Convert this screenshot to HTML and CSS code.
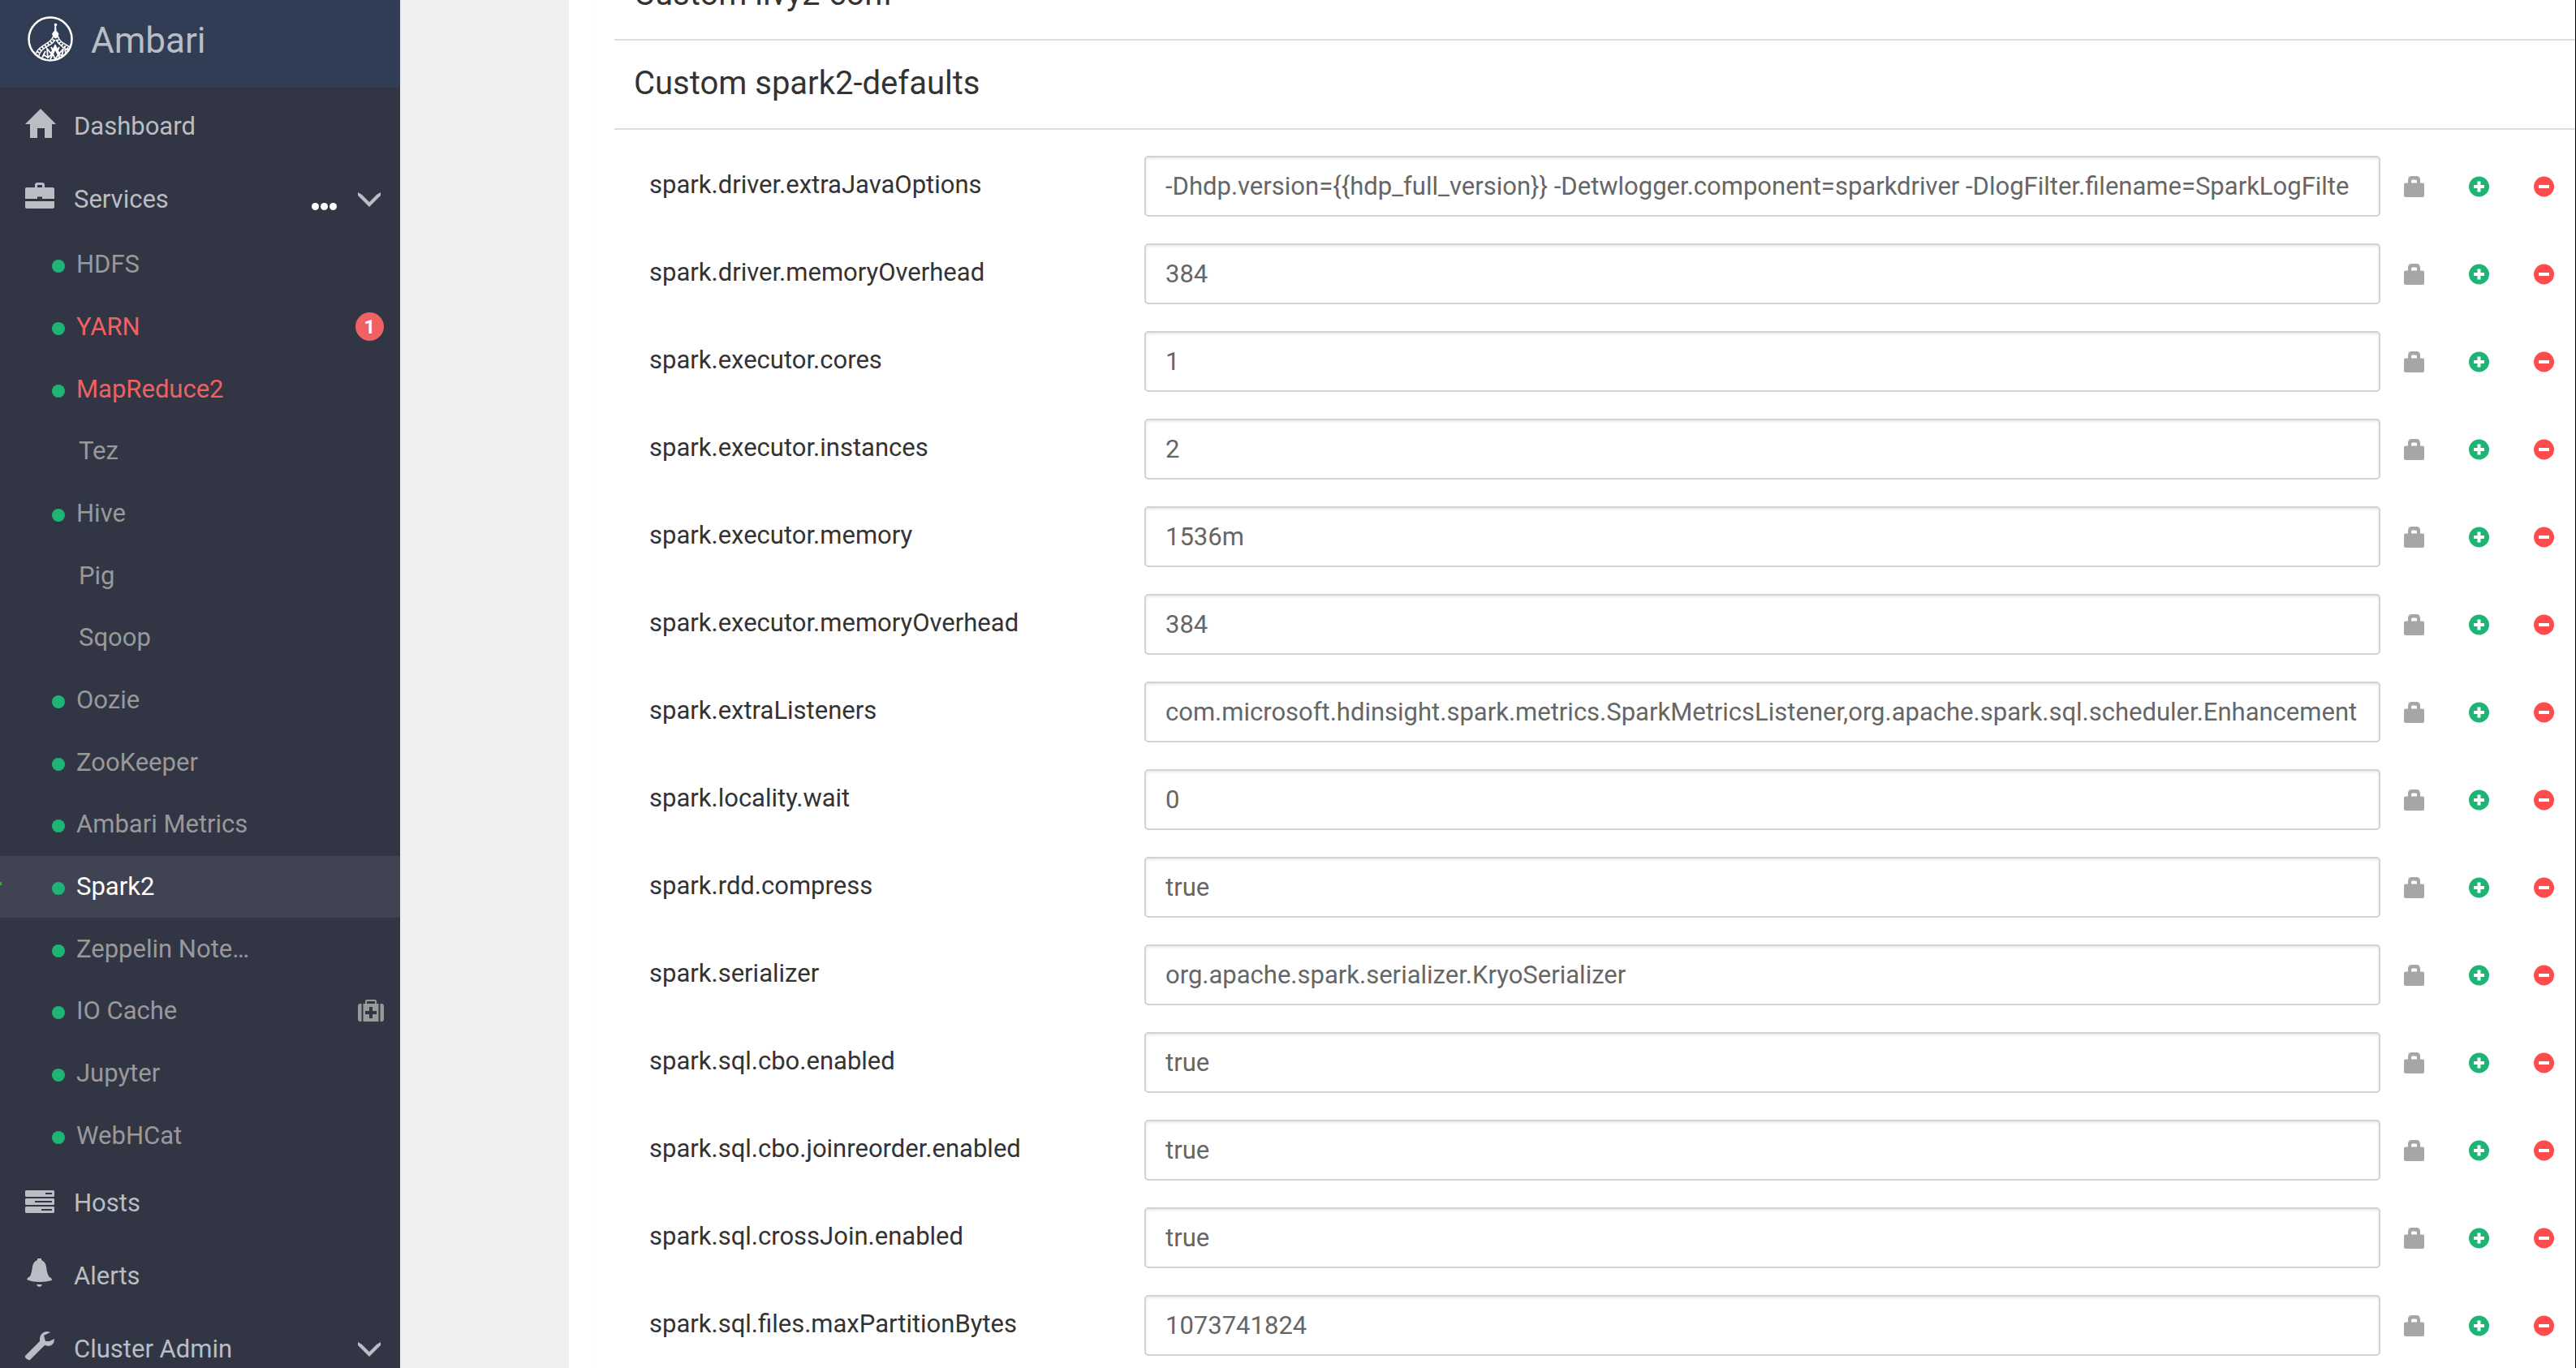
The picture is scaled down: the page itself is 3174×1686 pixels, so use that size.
FILE: index.html
```
<!DOCTYPE html>
<html lang="en">
<head>
  <meta charset="UTF-8" />
  <meta name="viewport" content="width=device-width, initial-scale=1" />
  <title>Ambari - Spark2</title>
  <link rel="stylesheet" href="styles.css">
</head>
<body>
  <svg class="sprite" aria-hidden="true">
    <symbol id="icon-lock" viewBox="0 0 25 26">
      <path fill-rule="evenodd" d="M0 10.500Q0 8.500 2 8.500H5V5Q5 0 10 0H15Q20 0 20 5V8.500H23Q25 8.500 25 10.500V24Q25 26 23 26H2Q0 26 0 24ZM9 8.500H16V6Q16 4.500 14.500 4.500H10.500Q9 4.500 9 6Z"/>
    </symbol>
    <symbol id="icon-plus" viewBox="0 0 25 25">
      <path fill-rule="evenodd" d="M12.500 0A12.500 12.500 0 1 1 12.500 25A12.500 12.500 0 1 1 12.500 0ZM10.500 6V10.500H6V14.500H10.500V19H14.500V14.500H19V10.500H14.500V6Z"/>
    </symbol>
    <symbol id="icon-minus" viewBox="0 0 25 25">
      <path fill-rule="evenodd" d="M12.500 0A12.500 12.500 0 1 1 12.500 25A12.500 12.500 0 1 1 12.500 0ZM6 10.500V14.500H19V10.500Z"/>
    </symbol>
    <symbol id="icon-chevron" viewBox="0 0 28 18">
      <path d="M0 0L5 3L14 12L23 3L28 0V4L14 18L0 4Z"/>
    </symbol>
  </svg>

  <div class="layout">
    <aside class="sidebar">
      <a class="brand" href="#">
        <svg class="brand-logo" viewBox="0 0 56 56" aria-hidden="true">
          <circle cx="28" cy="28" r="26.500" fill="none" stroke="#fff" stroke-width="2.500"/>
          <path fill="#fff" d="M33.500 9h1.500l.5 9 1.500 1.500 1.500 2.500-1.500 3h-5.500l-1.500-3 1.500-2.500 1.500-1.500z"/>
          <circle cx="34.500" cy="10.500" r="1.800" fill="#fff"/>
          <path fill="none" stroke="#fff" stroke-width="1.500" d="M32 24Q31 28 27 31L18 37Q12 41 10 46M37 24Q38 28 42 32L52 38M34 29Q32 33 26 36L20 40Q15 44 14 49M35 29Q38 34 43 38L51 43"/>
          <path fill="none" stroke="#fff" stroke-width="3" stroke-dasharray="2 2" d="M34 25Q33 30 26 34L18 39Q13 43 12 48M35 25Q37 31 42 35L51 41"/>
          <path fill="none" stroke="#fff" stroke-width="1.800" d="M18 51L22 43M25 52L24 40L29 46L34 36L39 46L44 40L42 50M28 53L34 40L40 52M19 47L25 51L31 46L34 53L38 47L44 49M46 41L47 46M29 38L31 42M39 38L37 42"/>
        </svg>
        <span>Ambari</span>
      </a>

      <nav>
        <a class="nav-item" href="#">
          <svg class="nav-icon" viewBox="0 0 38 38" aria-hidden="true"><path d="M19 1L38 20H33V37H24V25H15V37H6V20H0Z"/></svg>
          <span>Dashboard</span>
        </a>
        <a class="nav-item" href="#">
          <svg class="nav-icon" viewBox="0 0 38 38" aria-hidden="true"><path fill-rule="evenodd" d="M12 8V5Q12 2 15 2H21Q24 2 24 5V8H34Q36 8 36 10V22H21V19.500H15V22H0V10Q0 8 2 8ZM15 8H21V5H15ZM0 25H36V32Q36 34 34 34H2Q0 34 0 32Z"/></svg>
          <span>Services</span>
          <span class="nav-tools">
            <button class="more" type="button" aria-label="Service actions"><i></i><i></i><i></i></button>
            <svg class="chevron" aria-hidden="true"><use href="#icon-chevron"/></svg>
          </span>
        </a>

        <ul class="services">
          <li><a href="#"><i class="dot"></i>HDFS</a></li>
          <li><a class="alerted" href="#"><i class="dot"></i>YARN<span class="badge">1</span></a></li>
          <li><a class="alerted" href="#"><i class="dot"></i>MapReduce2</a></li>
          <li><a class="client" href="#">Tez</a></li>
          <li><a href="#"><i class="dot"></i>Hive</a></li>
          <li><a class="client" href="#">Pig</a></li>
          <li><a class="client" href="#">Sqoop</a></li>
          <li><a href="#"><i class="dot"></i>Oozie</a></li>
          <li><a href="#"><i class="dot"></i>ZooKeeper</a></li>
          <li><a href="#"><i class="dot"></i>Ambari Metrics</a></li>
          <li><a class="active" href="#"><i class="dot"></i>Spark2</a></li>
          <li><a href="#"><i class="dot"></i>Zeppelin Note…</a></li>
          <li><a href="#"><i class="dot"></i>IO Cache
            <svg class="medkit" viewBox="0 0 32 28" aria-label="Maintenance mode"><path fill-rule="evenodd" d="M3 5H4.500V27H3Q0 27 0 24V8Q0 5 3 5ZM27.500 5H29Q32 5 32 8V24Q32 27 29 27H27.500ZM6.500 5H9V2Q9 0 11 0H21Q23 0 23 2V5H25.500V27H6.500ZM11 5H21V2H11ZM14 9V14H9V18H14V23H18V18H23V14H18V9Z"/></svg>
          </a></li>
          <li><a href="#"><i class="dot"></i>Jupyter</a></li>
          <li><a href="#"><i class="dot"></i>WebHCat</a></li>
        </ul>

        <a class="nav-item" href="#">
          <svg class="nav-icon" viewBox="0 0 38 38" aria-hidden="true"><path fill-rule="evenodd" d="M1 7H35L36 8V14L35 15H1L0 14V8ZM25 10V12H33V10ZM1 17H35L36 18V24L35 25H1L0 24V18ZM12 20V22H33V20ZM1 27H35L36 28V34L35 35H1L0 34V28ZM20 30V32H33V30Z"/></svg>
          <span>Hosts</span>
        </a>
        <a class="nav-item" href="#">
          <svg class="nav-icon" viewBox="0 0 38 38" aria-hidden="true"><path d="M15 1H20V3Q25 5 26 11Q27 21 30 24Q33 25 33 28Q26 30 18 30Q8 30 2 27Q3 24 6 23Q8 19 9 11Q10 5 15 3ZM14 33H21Q20 36 18 36Q15 36 14 33Z"/></svg>
          <span>Alerts</span>
        </a>
        <a class="nav-item" href="#">
          <svg class="nav-icon" viewBox="0 0 38 38" aria-hidden="true"><path d="M31 2L23 6L25 13L30 13L36 10Q36 18 29 19L24 18L6 36Q3 37 0 33V31L18 13Q17 5 23 2Q27 0 31 2Z"/></svg>
          <span>Cluster Admin</span>
          <span class="nav-tools">
            <svg class="chevron" aria-hidden="true"><use href="#icon-chevron"/></svg>
          </span>
        </a>
      </nav>
    </aside>

    <main class="content">
      <div class="panel">
        <div class="panel-body">
          <h4 class="section-title">Custom livy2-conf</h4>
          <h4 class="section-title">Custom spark2-defaults</h4>
          <form class="configs" id="configs"></form>
        </div>
      </div>
    </main>
  </div>

  <script>
    const configs = [
      ['spark.driver.extraJavaOptions', '-Dhdp.version={{hdp_full_version}} -Detwlogger.component=sparkdriver -DlogFilter.filename=SparkLogFilte'],
      ['spark.driver.memoryOverhead', '384'],
      ['spark.executor.cores', '1'],
      ['spark.executor.instances', '2'],
      ['spark.executor.memory', '1536m'],
      ['spark.executor.memoryOverhead', '384'],
      ['spark.extraListeners', 'com.microsoft.hdinsight.spark.metrics.SparkMetricsListener,org.apache.spark.sql.scheduler.Enhancement'],
      ['spark.locality.wait', '0'],
      ['spark.rdd.compress', 'true'],
      ['spark.serializer', 'org.apache.spark.serializer.KryoSerializer'],
      ['spark.sql.cbo.enabled', 'true'],
      ['spark.sql.cbo.joinreorder.enabled', 'true'],
      ['spark.sql.crossJoin.enabled', 'true'],
      ['spark.sql.files.maxPartitionBytes', '1073741824']
    ];

    const form = document.getElementById('configs');

    configs.forEach(([name, value]) => {
      const row = document.createElement('div');
      row.className = 'config-row';
      row.innerHTML = `
        <label for="${name}">${name}</label>
        <input type="text" id="${name}" value="${value}" spellcheck="false" />
        <div class="actions">
          <button class="lock" type="button" aria-label="Final"><svg><use href="#icon-lock"/></svg></button>
          <button class="add" type="button" aria-label="Override"><svg><use href="#icon-plus"/></svg></button>
          <button class="remove" type="button" aria-label="Remove"><svg><use href="#icon-minus"/></svg></button>
        </div>
      `;
      form.appendChild(row);
    });
  </script>
</body>
</html>
```
FILE: styles.css
```
* {
  box-sizing: border-box;
}
body {
  margin: 0;
  font-family: Roboto, sans-serif;
  font-size: 31px;
  line-height: 44px;
  color: #333;
  background-color: #efefef;
}
a {
  color: inherit;
  text-decoration: none;
}
button {
  padding: 0;
  border: none;
  background: none;
  cursor: pointer;
}
.sprite {
  display: none;
}
.layout {
  display: flex;
  height: 100vh;
  overflow: hidden;
}

/* sidebar */
.sidebar {
  flex: 0 0 493px;
  background-color: #323544;
  color: #b8bec4;
}
.brand {
  display: flex;
  align-items: center;
  gap: 22px;
  height: 108px;
  padding: 0 34px 12px;
  background-color: #313d54;
  font-size: 44px;
}
.brand span {
  padding-top: 4px;
}
.brand-logo {
  width: 56px;
  height: 56px;
}
nav {
  padding-top: 3px;
}
.nav-item {
  display: flex;
  align-items: center;
  height: 90px;
  padding: 0 24px 0 31px;
}
.nav-icon {
  width: 38px;
  height: 38px;
  margin-right: 22px;
  margin-bottom: 8px;
  fill: #b8bec4;
}
.nav-tools {
  display: flex;
  align-items: center;
  gap: 26px;
  margin-left: auto;
}
.more {
  display: flex;
  gap: 2px;
  padding-top: 16px;
}
.more i {
  width: 9px;
  height: 9px;
  border-radius: 50%;
  background-color: #fff;
}
.chevron {
  width: 28px;
  height: 18px;
  fill: #b8bec4;
}
.services {
  display: grid;
  grid-auto-rows: 1fr;
  min-height: 1150px;
  margin: -3px 0 0;
  padding: 0;
  list-style: none;
  color: #999;
}
.services a {
  display: flex;
  align-items: center;
  height: 100%;
  padding: 0 20px 0 64px;
}
.services .client {
  padding-left: 97px;
}
.services .alerted {
  color: #ef6162;
}
.services .active {
  position: relative;
  background-color: #404351;
  color: #fff;
}
.services .active::before {
  content: "";
  position: absolute;
  left: 0;
  top: 32px;
  width: 2px;
  height: 4px;
  background-color: #3fae2a;
}
.dot {
  width: 16px;
  height: 16px;
  margin: 4px 14px 0 0;
  border-radius: 50%;
  background-color: #1eb475;
}
.badge {
  width: 35px;
  height: 35px;
  margin-left: auto;
  border-radius: 50%;
  background-color: #ef6162;
  color: #fff;
  font-size: 24px;
  font-weight: 700;
  line-height: 36px;
  text-align: center;
}
.medkit {
  width: 32px;
  height: 28px;
  margin-left: auto;
  fill: #999;
}

/* configs */
.content {
  flex: 1;
  min-width: 0;
  padding-left: 208px;
}
.panel {
  height: 100%;
  padding-left: 32px;
  border-right: 1px solid #000;
  background-color: #fff;
}
.panel-body {
  display: flow-root;
  border-left: 1px solid #fafafa;
}
.configs {
  padding: 32px 26px 0 66px;
}
.section-title {
  height: 110px;
  margin: 0 0 0 23px;
  padding: 31px 24px;
  border-bottom: 2px solid #ddd;
  font-size: 40px;
  font-weight: 400;
}
.section-title:first-child {
  margin-top: -60px;
}
.config-row {
  display: grid;
  grid-template-columns: 581px 1fr 185px;
  align-items: center;
  column-gap: 29px;
  margin-bottom: 33px;
}
.config-row label {
  padding-bottom: 4px;
}
.config-row input {
  width: 100%;
  height: 75px;
  padding: 0 24px;
  border: 2px solid #cfd3d7;
  border-radius: 5px;
  box-shadow: inset 0 2px 3px rgba(0, 0, 0, 0.08);
  color: #666;
  font-family: inherit;
  font-size: 31px;
}
.actions {
  display: flex;
  justify-content: space-between;
}
.actions button {
  display: flex;
}
.actions svg {
  width: 25px;
  height: 26px;
}
.lock {
  fill: #a6a6a6;
}
.add {
  fill: #1eb475;
}
.remove {
  fill: #ff4b4b;
}
```
